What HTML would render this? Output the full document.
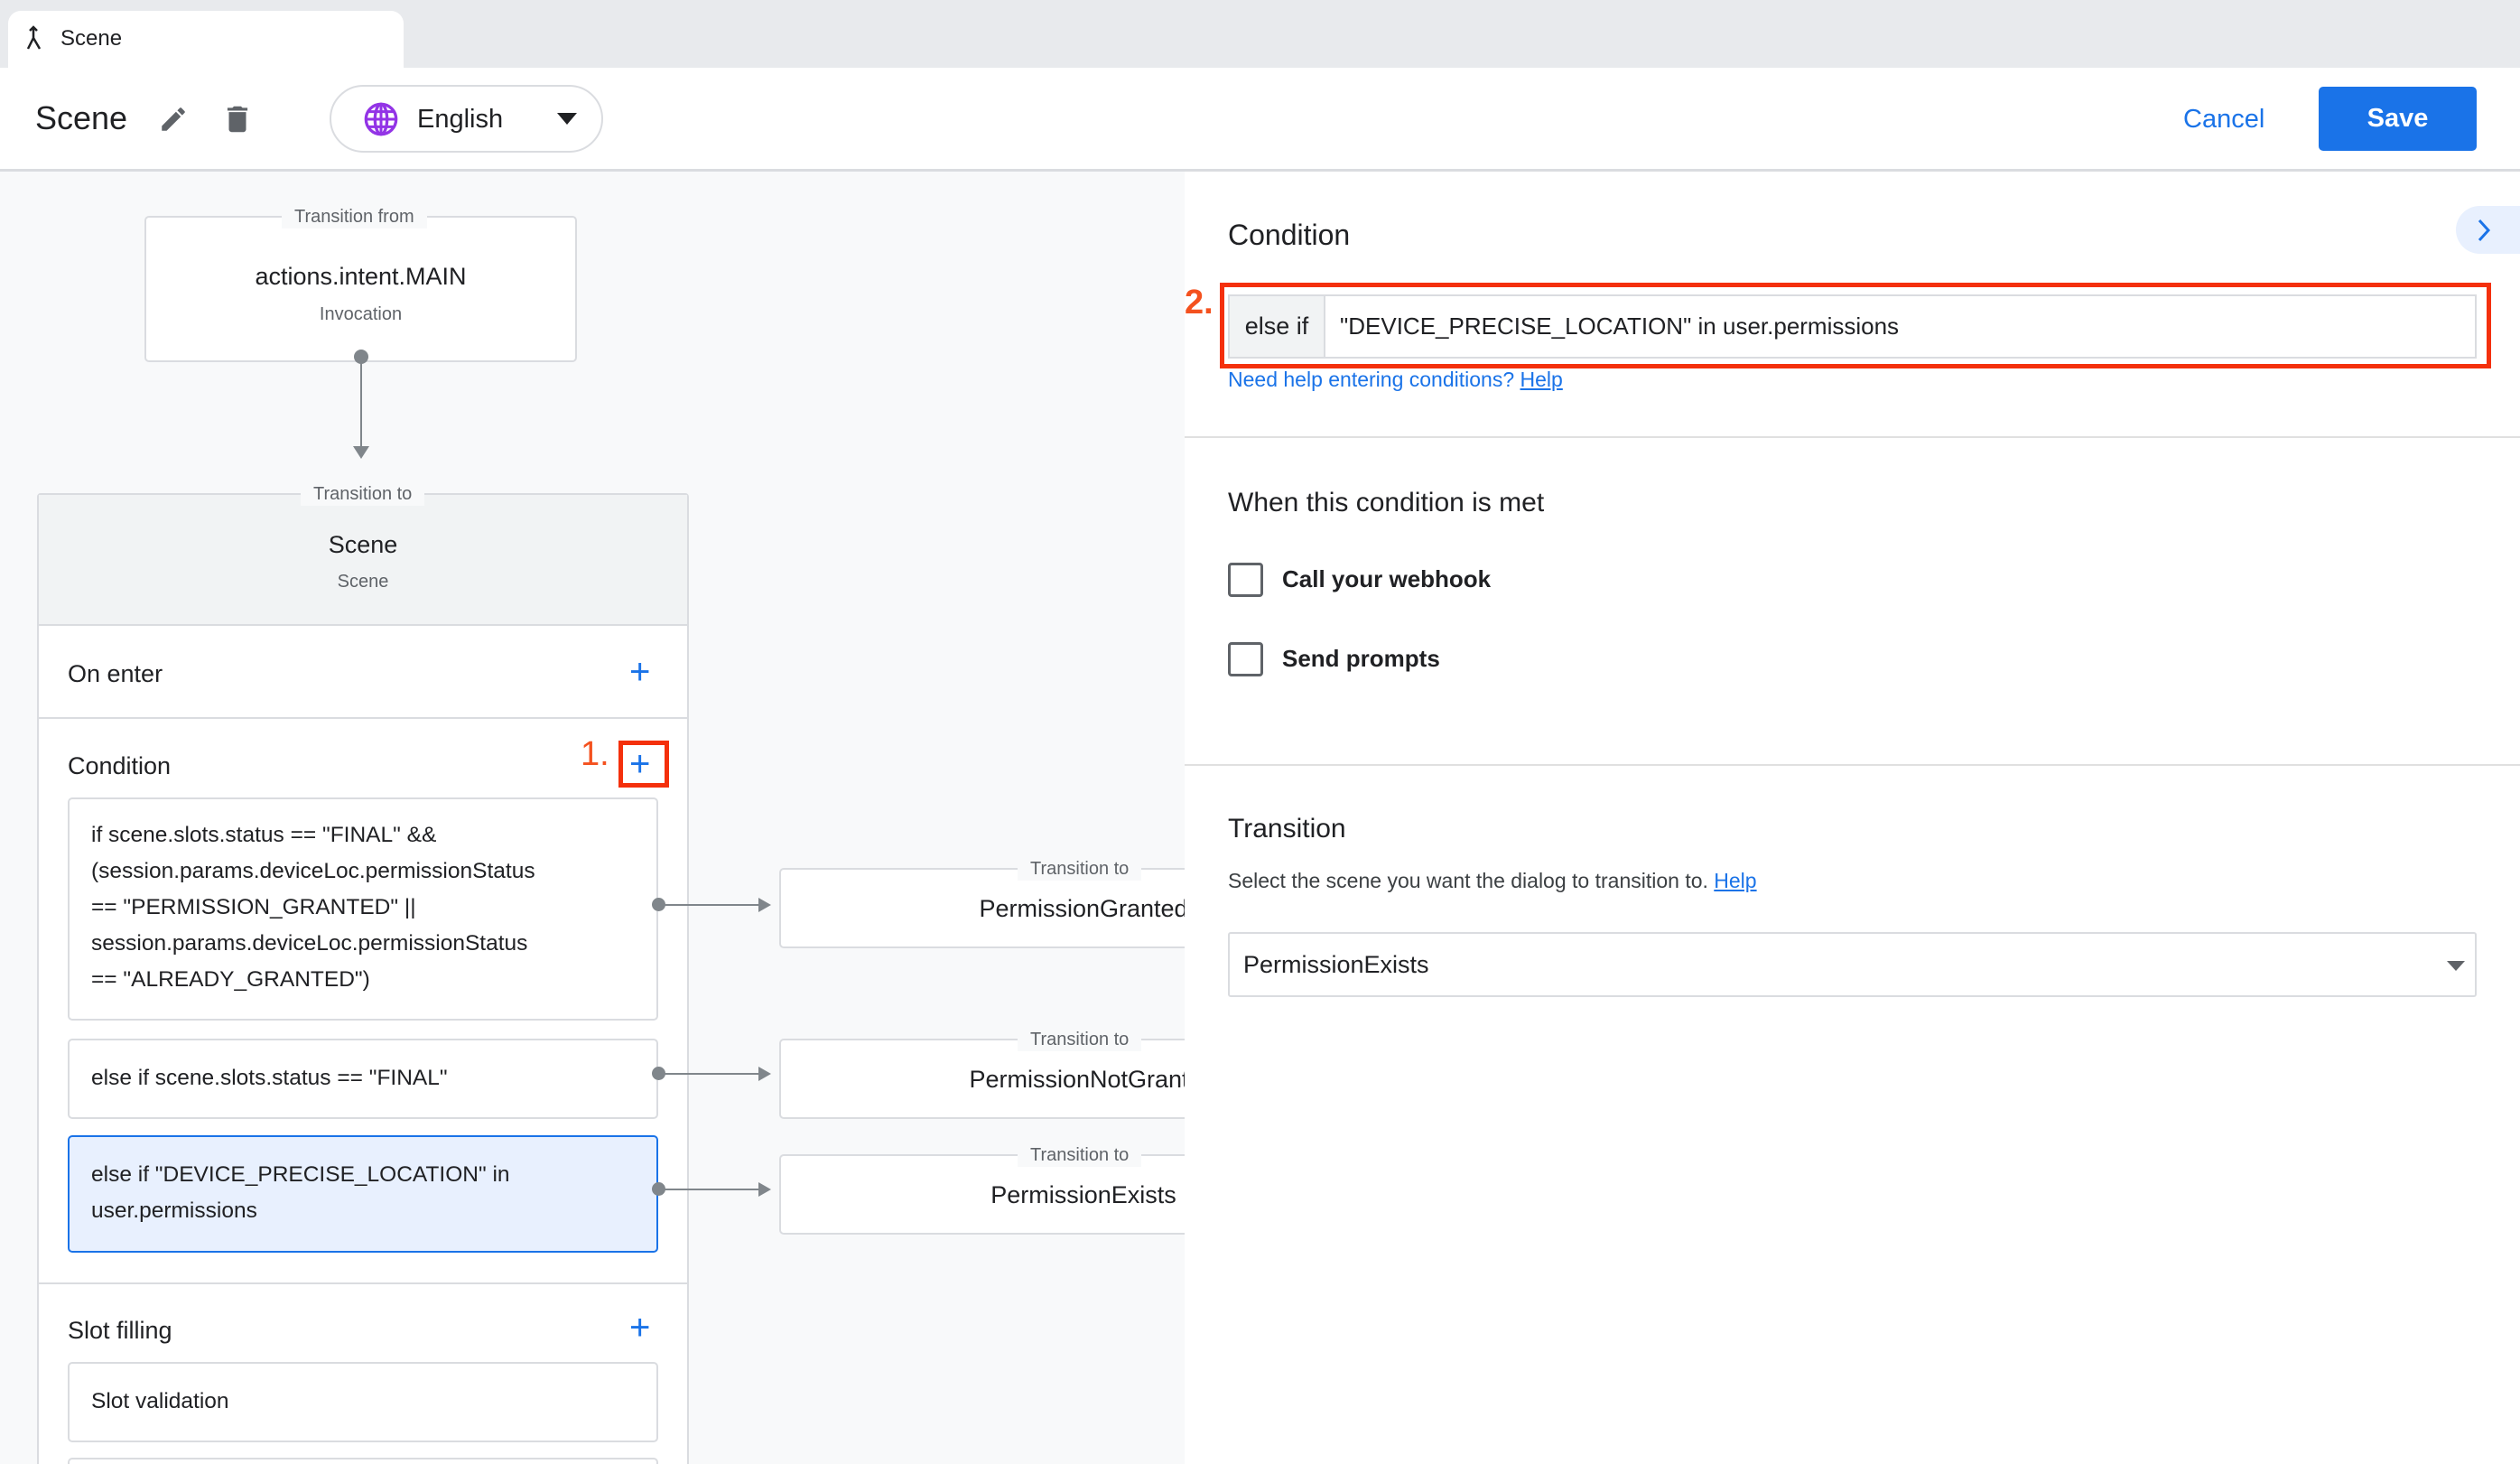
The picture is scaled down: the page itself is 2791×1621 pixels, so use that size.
<!DOCTYPE html>
<html><head><meta charset="utf-8"><style>
*{box-sizing:border-box;margin:0;padding:0}
html,body{width:2791px;height:1621px;overflow:hidden}
body{position:relative;font-family:"Liberation Sans",sans-serif;color:#202124;background:#fff}
.a{position:absolute}
.t{position:absolute;white-space:nowrap}
.box{position:absolute;background:#fff;border:2px solid #dadce0;border-radius:5px}
.lbl{position:absolute;top:-14px;background:#f8f9fa;color:#5f6368;font-size:20px;padding:0 14px;line-height:26px}
.plus{position:absolute;color:#1a73e8;font-size:40px;line-height:40px;font-weight:300}
.cb{position:absolute;width:39px;height:38px;border:3px solid #5f6368;border-radius:4px}
</style></head><body>
<div class="a" style="left:0;top:0;width:2791px;height:75px;background:#e8eaed"></div>
<div class="a" style="left:9px;top:12px;width:438px;height:63px;background:#fff;border-radius:14px 14px 0 0"></div>
<svg class="a" style="left:28px;top:28px" width="22" height="28" viewBox="0 0 22 28"><path d="M9 2v12l-6 12M9 14l7 12M5 6l4-4 4 4" stroke="#202124" stroke-width="2.5" fill="none"/></svg>
<div class="t" style="left:67px;top:29px;font-size:24px">Scene</div>
<div class="a" style="left:0;top:187px;width:2791px;height:3px;background:#dadce0"></div>
<div class="t" style="left:39px;top:110px;font-size:36px">Scene</div>
<svg class="a" style="left:175px;top:115px" width="34" height="34" viewBox="0 0 24 24"><path d="M3 17.25V21h3.75L17.81 9.94l-3.75-3.75L3 17.25zM20.71 7.04a1 1 0 0 0 0-1.41l-2.34-2.34a1 1 0 0 0-1.41 0l-1.83 1.83 3.75 3.75 1.83-1.83z" fill="#5f6368"/></svg>
<svg class="a" style="left:244px;top:112px" width="38" height="40" viewBox="0 0 24 24"><path d="M6 19c0 1.1.9 2 2 2h8c1.1 0 2-.9 2-2V7H6v12zM19 4h-3.5l-1-1h-5l-1 1H5v2h14V4z" fill="#5f6368"/></svg>
<div class="a" style="left:365px;top:94px;width:303px;height:75px;border:2px solid #dadce0;border-radius:38px"></div>
<svg class="a" style="left:402px;top:112px" width="40" height="40" viewBox="0 0 24 24"><circle cx="12" cy="12" r="10" fill="none" stroke="#9334e6" stroke-width="2"/><ellipse cx="12" cy="12" rx="4" ry="10" fill="none" stroke="#9334e6" stroke-width="2"/><path d="M2 12h20M12 2v20M3.5 7h17M3.5 17h17" stroke="#9334e6" stroke-width="1.8"/></svg>
<div class="t" style="left:462px;top:116px;font-size:29px">English</div>
<svg class="a" style="left:617px;top:125px" width="22" height="14"><path d="M0 0h22L11 13z" fill="#202124"/></svg>
<div class="t" style="left:2418px;top:116px;font-size:29px;color:#1a73e8">Cancel</div>
<div class="a" style="left:2568px;top:96px;width:175px;height:71px;background:#1a73e8;border-radius:5px;color:#fff;font-size:29px;font-weight:bold;text-align:center;line-height:71px">Save</div>
<div class="a" style="left:0;top:190px;width:1312px;height:1431px;background:#f8f9fa;overflow:hidden">
  <div class="box" style="left:160px;top:49px;width:479px;height:162px">
    <div class="lbl" style="left:150px">Transition from</div>
    <div class="t" style="left:0;width:475px;text-align:center;top:50px;font-size:27px">actions.intent.MAIN</div>
    <div class="t" style="left:0;width:475px;text-align:center;top:96px;font-size:20px;color:#5f6368">Invocation</div>
  </div>
  <div class="a" style="left:392px;top:197px;width:16px;height:16px;border-radius:50%;background:#80868b"></div>
  <div class="a" style="left:399px;top:205px;width:2px;height:100px;background:#80868b"></div>
  <svg class="a" style="left:391px;top:304px" width="18" height="14"><path d="M0 0h18L9 14z" fill="#80868b"/></svg>
  <div class="a" style="left:41px;top:356px;width:722px;height:1090px;background:#fff;border:2px solid #dadce0;border-radius:4px">
    <div class="a" style="left:0;top:0;width:718px;height:145px;background:#f1f3f4;border-bottom:2px solid #dadce0"></div>
    <div class="lbl" style="left:290px;background:#f8f9fa">Transition to</div>
    <div class="t" style="left:0;width:718px;text-align:center;top:40px;font-size:27px">Scene</div>
    <div class="t" style="left:0;width:718px;text-align:center;top:85px;font-size:20px;color:#5f6368">Scene</div>
    <div class="t" style="left:32px;top:183px;font-size:27px">On enter</div>
    <div class="plus" style="left:654px;top:176px">+</div>
    <div class="a" style="left:0;top:246px;width:718px;height:2px;background:#dadce0"></div>
    <div class="t" style="left:32px;top:285px;font-size:27px">Condition</div>
    <div class="t" style="left:600px;top:266px;font-size:38px;color:#f4511e">1.</div>
    <div class="a" style="left:642px;top:272px;width:56px;height:52px;border:5px solid #f4300c"></div>
    <div class="plus" style="left:654px;top:278px">+</div>
    <div class="box" style="left:32px;top:335px;width:654px;height:247px;font-size:24.5px;line-height:40px;padding:20px 24px">if scene.slots.status == "FINAL" &amp;&amp;<br>(session.params.deviceLoc.permissionStatus<br>== "PERMISSION_GRANTED" ||<br>session.params.deviceLoc.permissionStatus<br>== "ALREADY_GRANTED")</div>
    <div class="box" style="left:32px;top:602px;width:654px;height:89px;font-size:24.5px;line-height:40px;padding:22px 24px">else if scene.slots.status == "FINAL"</div>
    <div class="box" style="left:32px;top:709px;width:654px;height:130px;font-size:24.5px;line-height:40px;padding:22px 24px;background:#e8f0fe;border-color:#1a73e8">else if "DEVICE_PRECISE_LOCATION" in<br>user.permissions</div>
    <div class="a" style="left:0;top:872px;width:718px;height:2px;background:#dadce0"></div>
    <div class="t" style="left:32px;top:910px;font-size:27px">Slot filling</div>
    <div class="plus" style="left:654px;top:902px">+</div>
    <div class="box" style="left:32px;top:960px;width:654px;height:89px;font-size:24.5px;line-height:40px;padding:22px 24px">Slot validation</div>
    <div class="box" style="left:32px;top:1066px;width:654px;height:40px"></div>
  </div>
  <div class="a" style="left:722px;top:804px;width:15px;height:15px;border-radius:50%;background:#80868b"></div>
  <div class="a" style="left:730px;top:811px;width:115px;height:2px;background:#80868b"></div>
  <svg class="a" style="left:840px;top:804px" width="14" height="16"><path d="M0 0l14 8L0 16z" fill="#80868b"/></svg>
  <div class="a" style="left:722px;top:991px;width:15px;height:15px;border-radius:50%;background:#80868b"></div>
  <div class="a" style="left:730px;top:998px;width:115px;height:2px;background:#80868b"></div>
  <svg class="a" style="left:840px;top:991px" width="14" height="16"><path d="M0 0l14 8L0 16z" fill="#80868b"/></svg>
  <div class="a" style="left:722px;top:1119px;width:15px;height:15px;border-radius:50%;background:#80868b"></div>
  <div class="a" style="left:730px;top:1126px;width:115px;height:2px;background:#80868b"></div>
  <svg class="a" style="left:840px;top:1119px" width="14" height="16"><path d="M0 0l14 8L0 16z" fill="#80868b"/></svg>
  <div class="box" style="left:863px;top:771px;width:500px;height:89px"><div class="lbl" style="left:262px">Transition to</div><div class="t" style="left:0;width:670px;text-align:center;top:28px;font-size:27px">PermissionGranted</div></div>
  <div class="box" style="left:863px;top:960px;width:500px;height:89px"><div class="lbl" style="left:262px">Transition to</div><div class="t" style="left:0;width:690px;text-align:center;top:28px;font-size:27px">PermissionNotGranted</div></div>
  <div class="box" style="left:863px;top:1088px;width:500px;height:89px"><div class="lbl" style="left:262px">Transition to</div><div class="t" style="left:0;width:670px;text-align:center;top:28px;font-size:27px">PermissionExists</div></div>
</div>
<div class="a" style="left:1312px;top:190px;width:1479px;height:1431px;background:#fff">
  <div class="t" style="left:48px;top:52px;font-size:32px">Condition</div>
  <div class="a" style="left:1408px;top:38px;width:71px;height:53px;background:#e8f0fe;border-radius:27px 0 0 27px"></div>
  <svg class="a" style="left:1431px;top:52px" width="16" height="26"><path d="M3 2l10 11L3 24" stroke="#1a73e8" stroke-width="3" fill="none"/></svg>
  <div class="t" style="left:0;top:124px;font-size:38px;font-weight:bold;color:#f4511e">2.</div>
  <div class="a" style="left:39px;top:123px;width:1408px;height:95px;border:5px solid #f4300c"></div>
  <div class="a" style="left:48px;top:136px;width:1383px;height:71px;border:2px solid #dadce0">
    <div class="a" style="left:0;top:0;width:106px;height:67px;background:#f1f3f4;border-right:2px solid #dadce0;font-size:27px;line-height:67px;text-align:center">else if</div>
    <div class="t" style="left:122px;top:0;line-height:67px;font-size:26px">"DEVICE_PRECISE_LOCATION" in user.permissions</div>
  </div>
  <div class="t" style="left:48px;top:217px;font-size:23px;color:#1a73e8">Need help entering conditions? <u>Help</u></div>
  <div class="a" style="left:0;top:293px;width:1479px;height:2px;background:#e0e0e0"></div>
  <div class="t" style="left:48px;top:350px;font-size:30px">When this condition is met</div>
  <div class="cb" style="left:48px;top:433px"></div>
  <div class="t" style="left:108px;top:436px;font-size:26px;font-weight:bold">Call your webhook</div>
  <div class="cb" style="left:48px;top:521px"></div>
  <div class="t" style="left:108px;top:524px;font-size:26px;font-weight:bold">Send prompts</div>
  <div class="a" style="left:0;top:656px;width:1479px;height:2px;background:#e0e0e0"></div>
  <div class="t" style="left:48px;top:711px;font-size:30px">Transition</div>
  <div class="t" style="left:48px;top:772px;font-size:23px;color:#3c4043">Select the scene you want the dialog to transition to. <u style="color:#1a73e8">Help</u></div>
  <div class="a" style="left:48px;top:842px;width:1383px;height:72px;border:2px solid #dadce0;border-radius:3px">
    <div class="t" style="left:15px;top:0;line-height:68px;font-size:27px">PermissionExists</div>
    <svg class="a" style="left:1348px;top:30px" width="20" height="11"><path d="M0 0h20L10 11z" fill="#5f6368"/></svg>
  </div>
</div>
</body></html>
